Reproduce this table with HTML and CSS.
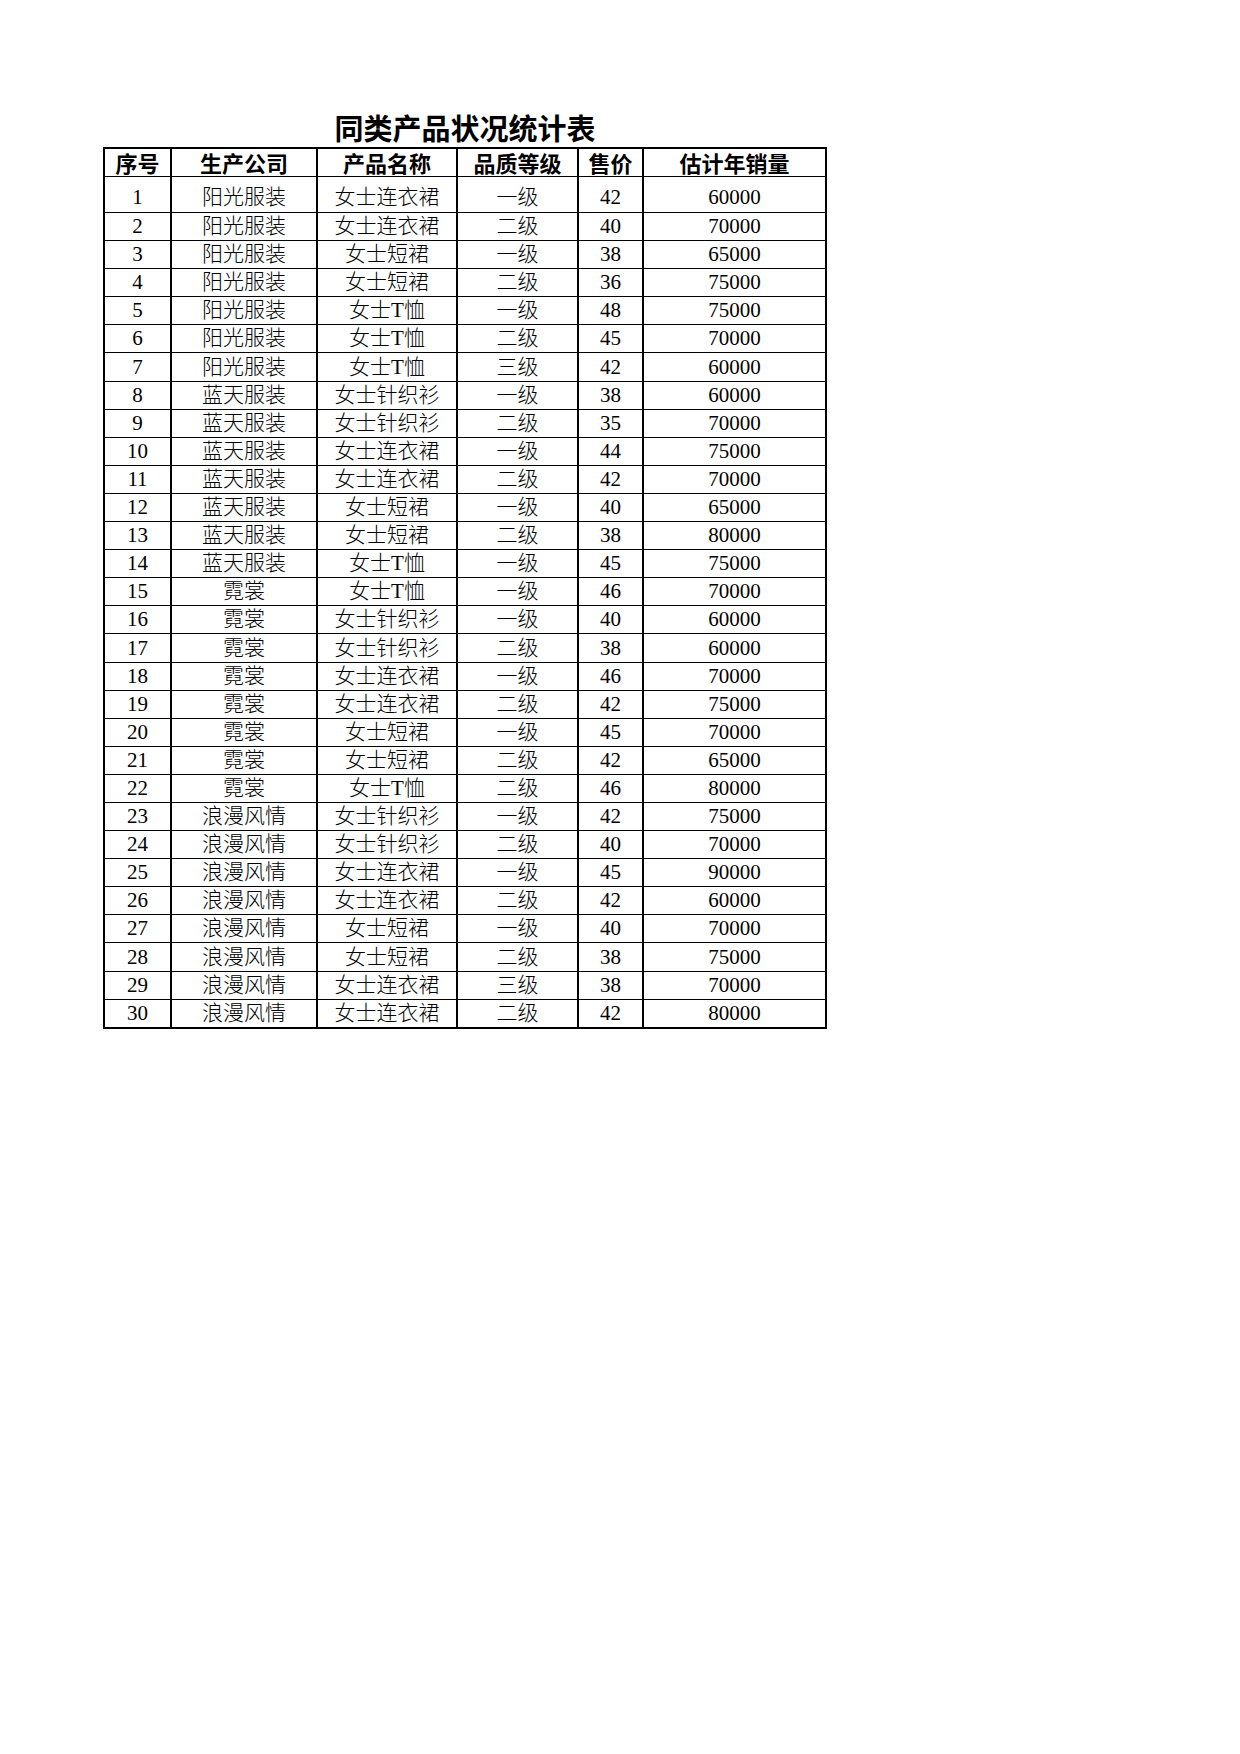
FILE: index.html
```html
<!DOCTYPE html>
<html lang="zh-CN">
<head>
<meta charset="utf-8">
<title>同类产品状况统计表</title>
<link rel="stylesheet" href="styles.css">
</head>
<body>
<div class="sheet">
  <h1 class="title">同类产品状况统计表</h1>
  <table class="grid">
    <colgroup>
      <col class="c1"><col class="c2"><col class="c3"><col class="c4"><col class="c5"><col class="c6">
    </colgroup>
    <thead>
      <tr><th>序号</th><th>生产公司</th><th>产品名称</th><th>品质等级</th><th>售价</th><th>估计年销量</th></tr>
    </thead>
    <tbody>
      <tr class="first"><td>1</td><td>阳光服装</td><td>女士连衣裙</td><td>一级</td><td>42</td><td>60000</td></tr>
      <tr><td>2</td><td>阳光服装</td><td>女士连衣裙</td><td>二级</td><td>40</td><td>70000</td></tr>
      <tr><td>3</td><td>阳光服装</td><td>女士短裙</td><td>一级</td><td>38</td><td>65000</td></tr>
      <tr><td>4</td><td>阳光服装</td><td>女士短裙</td><td>二级</td><td>36</td><td>75000</td></tr>
      <tr><td>5</td><td>阳光服装</td><td>女士T恤</td><td>一级</td><td>48</td><td>75000</td></tr>
      <tr><td>6</td><td>阳光服装</td><td>女士T恤</td><td>二级</td><td>45</td><td>70000</td></tr>
      <tr><td>7</td><td>阳光服装</td><td>女士T恤</td><td>三级</td><td>42</td><td>60000</td></tr>
      <tr><td>8</td><td>蓝天服装</td><td>女士针织衫</td><td>一级</td><td>38</td><td>60000</td></tr>
      <tr><td>9</td><td>蓝天服装</td><td>女士针织衫</td><td>二级</td><td>35</td><td>70000</td></tr>
      <tr><td>10</td><td>蓝天服装</td><td>女士连衣裙</td><td>一级</td><td>44</td><td>75000</td></tr>
      <tr><td>11</td><td>蓝天服装</td><td>女士连衣裙</td><td>二级</td><td>42</td><td>70000</td></tr>
      <tr><td>12</td><td>蓝天服装</td><td>女士短裙</td><td>一级</td><td>40</td><td>65000</td></tr>
      <tr><td>13</td><td>蓝天服装</td><td>女士短裙</td><td>二级</td><td>38</td><td>80000</td></tr>
      <tr><td>14</td><td>蓝天服装</td><td>女士T恤</td><td>一级</td><td>45</td><td>75000</td></tr>
      <tr><td>15</td><td>霓裳</td><td>女士T恤</td><td>一级</td><td>46</td><td>70000</td></tr>
      <tr><td>16</td><td>霓裳</td><td>女士针织衫</td><td>一级</td><td>40</td><td>60000</td></tr>
      <tr><td>17</td><td>霓裳</td><td>女士针织衫</td><td>二级</td><td>38</td><td>60000</td></tr>
      <tr><td>18</td><td>霓裳</td><td>女士连衣裙</td><td>一级</td><td>46</td><td>70000</td></tr>
      <tr><td>19</td><td>霓裳</td><td>女士连衣裙</td><td>二级</td><td>42</td><td>75000</td></tr>
      <tr><td>20</td><td>霓裳</td><td>女士短裙</td><td>一级</td><td>45</td><td>70000</td></tr>
      <tr><td>21</td><td>霓裳</td><td>女士短裙</td><td>二级</td><td>42</td><td>65000</td></tr>
      <tr><td>22</td><td>霓裳</td><td>女士T恤</td><td>二级</td><td>46</td><td>80000</td></tr>
      <tr><td>23</td><td>浪漫风情</td><td>女士针织衫</td><td>一级</td><td>42</td><td>75000</td></tr>
      <tr><td>24</td><td>浪漫风情</td><td>女士针织衫</td><td>二级</td><td>40</td><td>70000</td></tr>
      <tr><td>25</td><td>浪漫风情</td><td>女士连衣裙</td><td>一级</td><td>45</td><td>90000</td></tr>
      <tr><td>26</td><td>浪漫风情</td><td>女士连衣裙</td><td>二级</td><td>42</td><td>60000</td></tr>
      <tr><td>27</td><td>浪漫风情</td><td>女士短裙</td><td>一级</td><td>40</td><td>70000</td></tr>
      <tr><td>28</td><td>浪漫风情</td><td>女士短裙</td><td>二级</td><td>38</td><td>75000</td></tr>
      <tr><td>29</td><td>浪漫风情</td><td>女士连衣裙</td><td>三级</td><td>38</td><td>70000</td></tr>
      <tr><td>30</td><td>浪漫风情</td><td>女士连衣裙</td><td>二级</td><td>42</td><td>80000</td></tr>
    </tbody>
  </table>
</div>
</body>
</html>
```

FILE: styles.css
```css
html, body {
  margin: 0;
  padding: 0;
  background: #ffffff;
  color: #000000;
}

.sheet {
  padding: 112px 0 0 103px;
  width: 724px;
}

.title {
  margin: 0;
  height: 35px;
  line-height: 30px;
  font-family: "Noto Sans CJK SC", sans-serif;
  font-weight: 700;
  font-size: 29px;
  text-align: center;
  letter-spacing: 0;
}

.grid {
  border-collapse: collapse;
  table-layout: fixed;
  width: 724px;
  border: 2px solid #000;
}

.c1 { width: 67px; }
.c2 { width: 146px; }
.c3 { width: 140px; }
.c4 { width: 121px; }
.c5 { width: 65px; }
.c6 { width: 183px; }

.grid th,
.grid td {
  padding: 0;
  text-align: center;
  white-space: nowrap;
  border-top: 1px solid #000;
  border-bottom: 1px solid #000;
  border-left: 2px solid #000;
  border-right: 2px solid #000;
}

.grid th {
  height: 27px;
  line-height: 25px;
  font-family: "Noto Sans CJK SC", sans-serif;
  font-weight: 700;
  font-size: 22px;
  vertical-align: middle;
}

.grid td {
  height: 27.1px;
  line-height: 27px;
  font-family: "Liberation Serif", "Noto Sans CJK SC", serif;
  font-weight: 300;
  font-size: 21px;
  vertical-align: bottom;
}

.grid tr.first td {
  height: 34px;
  padding-bottom: 1px;
}
```
